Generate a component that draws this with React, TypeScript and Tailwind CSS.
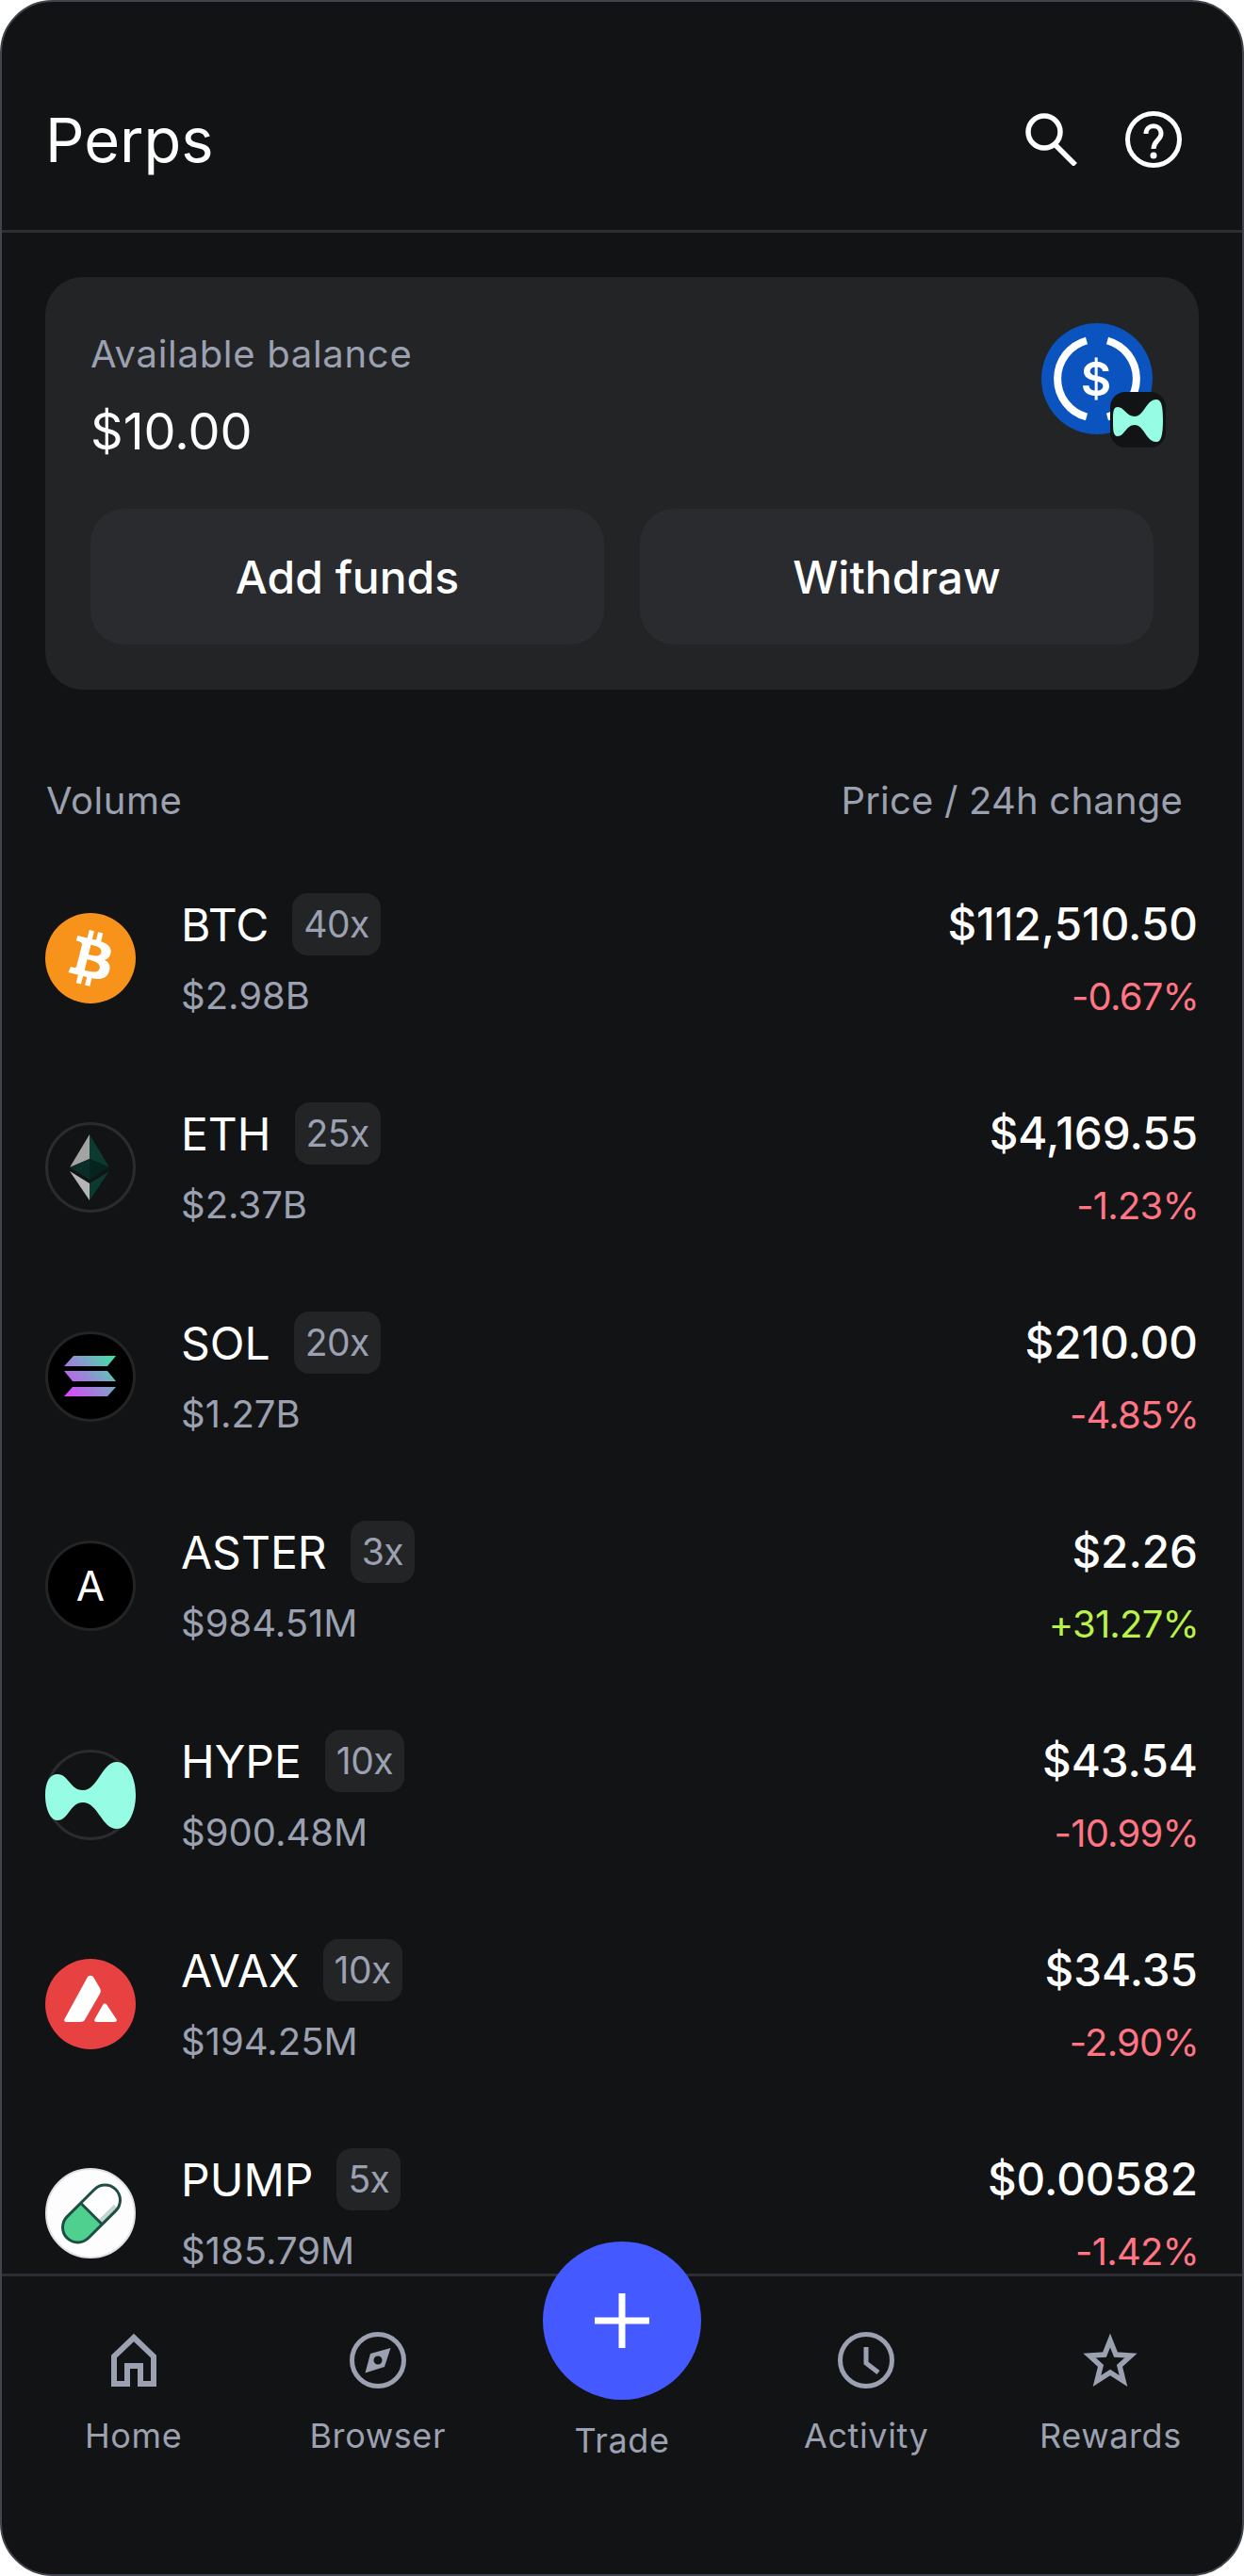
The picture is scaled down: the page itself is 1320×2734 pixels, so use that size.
import { ReactNode } from "react";

const gray = "#9ba1b0";

type Market = {
  name: string;
  lev: string;
  vol: string;
  price: string;
  change: string;
  up?: boolean;
  icon: ReactNode;
};

const Hype = ({ size = 96 }: { size?: number }) => (
  <svg width={size} height={size} viewBox="0 0 96 96">
    <path
      d="M0 48C0 34 5 26 13 26C25 26 26 43 40 43C56 43 60 13 76 13C88 13 96 30 96 48C96 66 88 84 76 84C60 84 56 56 40 56C26 56 25 75 13 75C5 75 0 62 0 48Z"
      fill="#97fce4"
    />
  </svg>
);

const BtcIcon = () => (
  <svg width="96" height="96" viewBox="0 0 32 32">
    <circle cx="16" cy="16" r="16" fill="#f7931a" />
    <path
      fill="#fff"
      d="M23.189 14.02c.314-2.096-1.283-3.223-3.465-3.975l.708-2.84-1.728-.43-.69 2.765c-.454-.114-.92-.22-1.385-.326l.695-2.783L15.596 6l-.708 2.839c-.376-.086-.746-.17-1.104-.26l.002-.009-2.384-.595-.46 1.846s1.283.294 1.256.312c.7.175.826.638.805 1.006l-.806 3.235c.048.012.11.03.18.057l-.183-.045-1.13 4.532c-.086.212-.303.531-.793.41.018.025-1.256-.313-1.256-.313l-.858 1.978 2.25.561c.418.105.828.215 1.231.318l-.715 2.872 1.727.43.708-2.84c.472.127.93.245 1.378.357l-.706 2.828 1.728.43.715-2.866c2.948.558 5.164.333 6.097-2.333.752-2.146-.037-3.385-1.588-4.192 1.13-.26 1.98-1.003 2.207-2.538zm-3.95 5.538c-.533 2.147-4.148.986-5.32.695l.95-3.805c1.172.293 4.929.872 4.37 3.11zm.535-5.569c-.487 1.953-3.495.96-4.47.717l.86-3.45c.975.243 4.118.696 3.61 2.733z"
    />
  </svg>
);

const EthIcon = () => (
  <svg width="96" height="96" viewBox="0 0 96 96">
    <circle cx="48" cy="48" r="46.5" fill="#121314" stroke="#2a2c2f" strokeWidth="3" />
    <path d="M47 13L26 48L47 39Z" fill="#a3a3a3" />
    <path d="M47 13L68 48L47 39Z" fill="#0c3a30" />
    <path d="M47 39L26 48L47 61Z" fill="#0a2e27" />
    <path d="M47 39L68 48L47 61Z" fill="#06241e" />
    <path d="M26 52L47 83V65Z" fill="#b5b5b5" />
    <path d="M68 52L47 83V65Z" fill="#0c3a30" />
  </svg>
);

const SolIcon = () => (
  <svg width="96" height="96" viewBox="0 0 96 96">
    <defs>
      <linearGradient id="sol" x1="24" y1="72" x2="74" y2="24" gradientUnits="userSpaceOnUse">
        <stop offset="0" stopColor="#e040fb" />
        <stop offset="1" stopColor="#3ae8a4" />
      </linearGradient>
    </defs>
    <circle cx="48" cy="48" r="46.5" fill="#000" stroke="#232426" strokeWidth="3" />
    <path d="M30 26H75L66 37H20Z" fill="url(#sol)" />
    <path d="M20 42H66L75 53H29Z" fill="url(#sol)" />
    <path d="M29 59H75L66 69H20Z" fill="url(#sol)" />
  </svg>
);

const AsterIcon = () => (
  <div className="flex size-[96px] items-center justify-center rounded-full border-[3px] border-[#232426] bg-black text-[44px] leading-none text-white">
    A
  </div>
);

const HypeIcon = () => (
  <div className="relative size-[96px] rounded-full border-[3px] border-[#2a2c2f]">
    <div className="absolute -left-[3px] -top-[3px]">
      <Hype />
    </div>
  </div>
);

const AvaxIcon = () => (
  <svg width="96" height="96" viewBox="0 0 96 96">
    <circle cx="48" cy="48" r="48" fill="#e84142" />
    <path
      d="M44.5 20C46 17 50 17 51.5 20L58 31C59 33 59 35 58 37L43 63C41.500 66 40 67 37 67H23C20 67 19.500 65 21 63Z"
      fill="#fff"
    />
    <path
      d="M61 49C62 47 64.500 47 65.500 49L75.500 64C76.500 66 75.500 67 73.500 67H54.500C52.500 67 51.500 66 52.500 64Z"
      fill="#fff"
    />
  </svg>
);

const PumpIcon = () => (
  <svg width="96" height="96" viewBox="0 0 96 96">
    <circle cx="48" cy="48" r="47" fill="#fdfdfd" stroke="#dfe1e5" strokeWidth="2" />
    <g transform="rotate(45 49 48.500)">
      <path d="M33 48.500V28A16 16 0 0 1 65 28V48.500Z" fill="#fff" />
      <path d="M59 25V48.500H65V28C65 26 62 24 59 25Z" fill="#c5d5d2" />
      <path d="M33 48.500V69A16 16 0 0 0 65 69V48.500Z" fill="#4fd08e" />
      <path d="M33 48.500H65" stroke="#1d4d44" strokeWidth="3" />
      <rect x="33" y="12" width="32" height="73" rx="16" fill="none" stroke="#1d4d44" strokeWidth="3" />
    </g>
  </svg>
);

const markets: Market[] = [
  { name: "BTC", lev: "40x", vol: "$2.98B", price: "$112,510.50", change: "-0.67%", icon: <BtcIcon /> },
  { name: "ETH", lev: "25x", vol: "$2.37B", price: "$4,169.55", change: "-1.23%", icon: <EthIcon /> },
  { name: "SOL", lev: "20x", vol: "$1.27B", price: "$210.00", change: "-4.85%", icon: <SolIcon /> },
  { name: "ASTER", lev: "3x", vol: "$984.51M", price: "$2.26", change: "+31.27%", up: true, icon: <AsterIcon /> },
  { name: "HYPE", lev: "10x", vol: "$900.48M", price: "$43.54", change: "-10.99%", icon: <HypeIcon /> },
  { name: "AVAX", lev: "10x", vol: "$194.25M", price: "$34.35", change: "-2.90%", icon: <AvaxIcon /> },
  { name: "PUMP", lev: "5x", vol: "$185.79M", price: "$0.00582", change: "-1.42%", icon: <PumpIcon /> },
];

const Row = ({ m }: { m: Market }) => (
  <div className="flex h-[222px] shrink-0 items-center justify-between">
    <div className="flex items-center gap-[48px]">
      <div className="size-[96px] shrink-0">{m.icon}</div>
      <div className="flex flex-col gap-[18px] pb-[4px]">
        <div className="flex h-[66px] items-center gap-[25px]">
          <span className="pt-[2px] text-[48px] leading-none text-white">{m.name}</span>
          <span className="flex h-[66px] items-center rounded-[16px] bg-[#232426] px-[12px] text-[39px] tracking-[-0.5px] text-[#9ba1b0]">
            {m.lev}
          </span>
        </div>
        <span className="text-[40px] leading-[50px] text-[#9ba1b0]">{m.vol}</span>
      </div>
    </div>
    <div className="flex flex-col items-end gap-[20px] pb-[4px]">
      <span className="flex h-[66px] items-center pr-[1px] text-[47.5px] font-medium text-white">{m.price}</span>
      <span className={`text-[40px] leading-[48px] tracking-[-0.8px] ${m.up ? "text-[#baf24a]" : "text-[#ff7584]"}`}>
        {m.change}
      </span>
    </div>
  </div>
);

const HomeIcon = () => (
  <svg width="60" height="60" viewBox="0 0 60 60" fill="none" stroke={gray} strokeWidth="6">
    <path d="M9 55V26L30 6L51 26V55H37V36H23V55Z" />
  </svg>
);

const CompassIcon = () => (
  <svg width="60" height="60" viewBox="0 0 60 60" fill="none">
    <circle cx="30" cy="30" r="27.500" stroke={gray} strokeWidth="5" />
    <path
      fillRule="evenodd"
      d="M43.500 17L37 37L16.500 43.500L22 23ZM30 25.500A4.500 4.500 0 1 0 30 34.500A4.500 4.500 0 1 0 30 25.500Z"
      fill={gray}
    />
  </svg>
);

const ClockIcon = () => (
  <svg width="60" height="60" viewBox="0 0 60 60" fill="none" stroke={gray} strokeWidth="5">
    <circle cx="30" cy="30" r="27.500" />
    <path d="M30 16V33L43 43" />
  </svg>
);

const StarIcon = () => (
  <svg width="60" height="60" viewBox="0 0 60 60" fill="none" stroke={gray} strokeWidth="5.500">
    <path d="M30 9L36 24L52 25L40 36L44 52L30 43L16 52L20 36L8 25L24 24Z" />
  </svg>
);

const NavItem = ({ label, icon }: { label: string; icon: ReactNode }) => (
  <div className="flex flex-col items-center gap-[28px] pt-[59px]">
    <div className="size-[60px]">{icon}</div>
    <span className="text-[36px] leading-[44px] tracking-[0.6px] text-[#9ba1b0]">{label}</span>
  </div>
);

export default function App() {
  return (
    <div className="h-[2734px] w-[1320px] bg-white font-[family-name:Inter,sans-serif]">
      <div className="flex h-full flex-col overflow-hidden rounded-[56px] border-2 border-[#3f444d] bg-[#121314]">
        <header className="flex h-[245px] shrink-0 items-center justify-between border-b-[3px] border-[#2c2e33] pl-[46px] pr-[64px] pt-[50px]">
          <h1 className="text-[65px] leading-none text-white">Perps</h1>
          <div className="flex items-center gap-[50px]">
            <svg width="56" height="56" viewBox="0 0 56 56" fill="none" stroke="#fff" strokeWidth="5.500">
              <circle cx="20" cy="20" r="17" />
              <path d="M31 33L53 55" />
            </svg>
            <svg width="60" height="60" viewBox="0 0 60 60" fill="none" stroke="#fff" strokeWidth="5">
              <circle cx="30" cy="30" r="27.500" />
              <path d="M22 24C22 13 38 13 38 24C38 31 30 31 30 40" />
              <circle cx="30" cy="47" r="3.500" fill="#fff" stroke="none" />
            </svg>
          </div>
        </header>

        <div className="mx-[46px] mt-[47px] flex h-[438px] shrink-0 flex-col rounded-[40px] bg-[#232426] px-[48px] pt-[58px]">
          <div className="flex justify-between">
            <div className="flex flex-col gap-[27px]">
              <span className="text-[40px] leading-[48px] tracking-[0.7px] text-[#9ba1b0]">Available balance</span>
              <span className="text-[54px] leading-[62px] text-white">$10.00</span>
            </div>
            <div className="relative -mt-[9px] mr-[1px] size-[118px]">
              <svg width="118" height="118" viewBox="0 0 118 118">
                <circle cx="59" cy="59" r="59" fill="#0b53bf" />
                <path d="M48 18.500A42 42 0 0 0 48 99.500" fill="none" stroke="#fff" strokeWidth="8" />
                <path d="M70 18.500A42 42 0 0 1 70 99.500" fill="none" stroke="#fff" strokeWidth="8" />
                <text x="58" y="77" textAnchor="middle" fontFamily="Inter" fontWeight="600" fontSize="50" fill="#fff">
                  $
                </text>
              </svg>
              <div className="absolute left-[73px] top-[73px] size-[59px] rounded-[16px] bg-[#121314]">
                <svg width="59" height="59" viewBox="0 0 59 59">
                  <path
                    d="M3 31C3 22 3 16 8 16C15 16 17 26 26 26C36 26 38 8 49 8C54 8 56 14 56 30C56 46 54 53 49 53C38 53 36 35 26 35C17 35 15 47 8 47C3 47 3 40 3 31Z"
                    fill="#97fce4"
                  />
                </svg>
              </div>
            </div>
          </div>
          <div className="mt-[51px] grid grid-cols-2 gap-[38px]">
            <div className="flex h-[144px] items-center justify-center rounded-[36px] bg-[#2a2b2f] pt-[2px] text-[48px] font-medium text-white">
              Add funds
            </div>
            <div className="flex h-[144px] items-center justify-center rounded-[36px] bg-[#2a2b2f] pt-[2px] text-[48px] font-medium text-white">
              Withdraw
            </div>
          </div>
        </div>

        <div className="mx-[47px] mt-[94px] flex shrink-0 justify-between pr-[16px] text-[40px] leading-[48px] tracking-[0.2px] text-[#9ba1b0]">
          <span className="tracking-[0.5px]">Volume</span>
          <span>Price / 24h change</span>
        </div>

        <div className="mx-[46px] mt-[32px] flex min-h-0 flex-1 flex-col overflow-hidden">
          {markets.map((m) => (
            <Row key={m.name} m={m} />
          ))}
        </div>

        <nav className="grid h-[319px] shrink-0 grid-cols-5 border-t-[3px] border-[#2c2e33] px-[10px]">
          <NavItem label="Home" icon={<HomeIcon />} />
          <NavItem label="Browser" icon={<CompassIcon />} />
          <div className="z-10 -mt-[37px] flex flex-col items-center gap-[21px]">
            <div className="flex size-[168px] items-center justify-center rounded-full bg-[#4459ff]">
              <svg width="58" height="58" viewBox="0 0 58 58" stroke="#fff" strokeWidth="7">
                <path d="M29 0V58M0 29H58" />
              </svg>
            </div>
            <span className="text-[36px] leading-[44px] tracking-[0.6px] text-[#9ba1b0]">Trade</span>
          </div>
          <NavItem label="Activity" icon={<ClockIcon />} />
          <NavItem label="Rewards" icon={<StarIcon />} />
        </nav>
      </div>
    </div>
  );
}
